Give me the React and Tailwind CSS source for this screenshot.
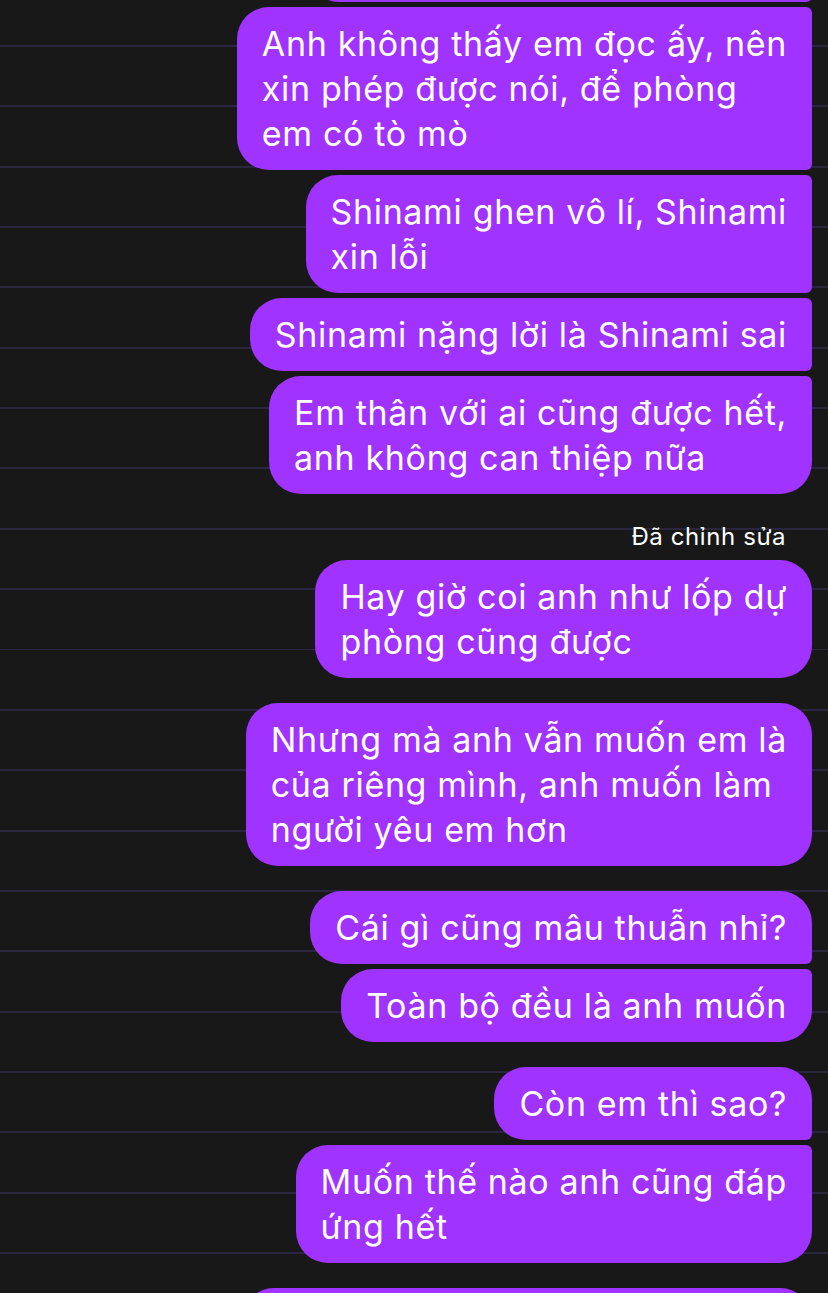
import React from 'react'

const BIG = 'rounded-[32px]'

const Bubble = ({ lines, tr = 'big', br = 'big', className = '' }) => {
    const trc = tr === 'big' ? 'rounded-tr-[32px]' : 'rounded-tr-[6px]';
    const brc = br === 'big' ? 'rounded-br-[32px]' : 'rounded-br-[6px]';
    return (
        <div className={`${BIG} ${trc} ${brc} bg-[#a033ff] text-white px-[25px] py-[14px] text-[34px] leading-[45px] tracking-[0.65px] whitespace-nowrap ${className}`}>
            {lines.map((l, i) => (
                <div key={i}>{l}</div>
            ))}
        </div>
    )
}

const App = () => {
    return (
        <div
            className="h-[1293px] w-[828px] overflow-hidden bg-[#181818] bg-[image:repeating-linear-gradient(to_bottom,transparent_0px,transparent_45px,#2a2640_45px,#2a2640_47px,transparent_47px,transparent_60.35px)]"
            style={{ fontFamily: 'Inter, "Noto Sans", sans-serif' }}
        >
            <div className="flex flex-col items-end pr-4">
                {/* cut-off bubble at the top */}
                <div className="-mt-[70px] h-[72px] w-[505px] rounded-[32px] rounded-tr-[6px] rounded-br-[6px] bg-[#a033ff]"></div>

                <div className="mt-[5px] flex flex-col items-end gap-[5px]">
                    <Bubble tr="small" br="small" lines={['Anh không thấy em đọc ấy, nên', 'xin phép được nói, để phòng', 'em có tò mò']} />
                    <Bubble tr="small" br="small" lines={['Shinami ghen vô lí, Shinami', 'xin lỗi']} />
                    <Bubble tr="small" br="small" lines={['Shinami nặng lời là Shinami sai']} />
                    <Bubble tr="small" lines={['Em thân với ai cũng được hết,', 'anh không can thiệp nữa']} />
                </div>

                <div className="mt-[30px] mb-[10px] pr-[26px] text-[24px] leading-[26px] tracking-[0.6px] text-white">Đã chỉnh sửa</div>

                <Bubble lines={['Hay giờ coi anh như lốp dự', 'phòng cũng được']} />

                <Bubble className="mt-[25px]" lines={['Nhưng mà anh vẫn muốn em là', 'của riêng mình, anh muốn làm', 'người yêu em hơn']} />

                <div className="mt-[25px] flex flex-col items-end gap-[5px]">
                    <Bubble br="small" lines={['Cái gì cũng mâu thuẫn nhỉ?']} />
                    <Bubble tr="small" lines={['Toàn bộ đều là anh muốn']} />
                </div>

                <div className="mt-[25px] flex flex-col items-end gap-[5px]">
                    <Bubble br="small" lines={['Còn em thì sao?']} />
                    <Bubble tr="small" lines={['Muốn thế nào anh cũng đáp', 'ứng hết']} />
                </div>

                <div className="mt-[25px] h-[80px] w-[570px] rounded-[32px] bg-[#a033ff]"></div>
            </div>
        </div>
    )
}

export default App
